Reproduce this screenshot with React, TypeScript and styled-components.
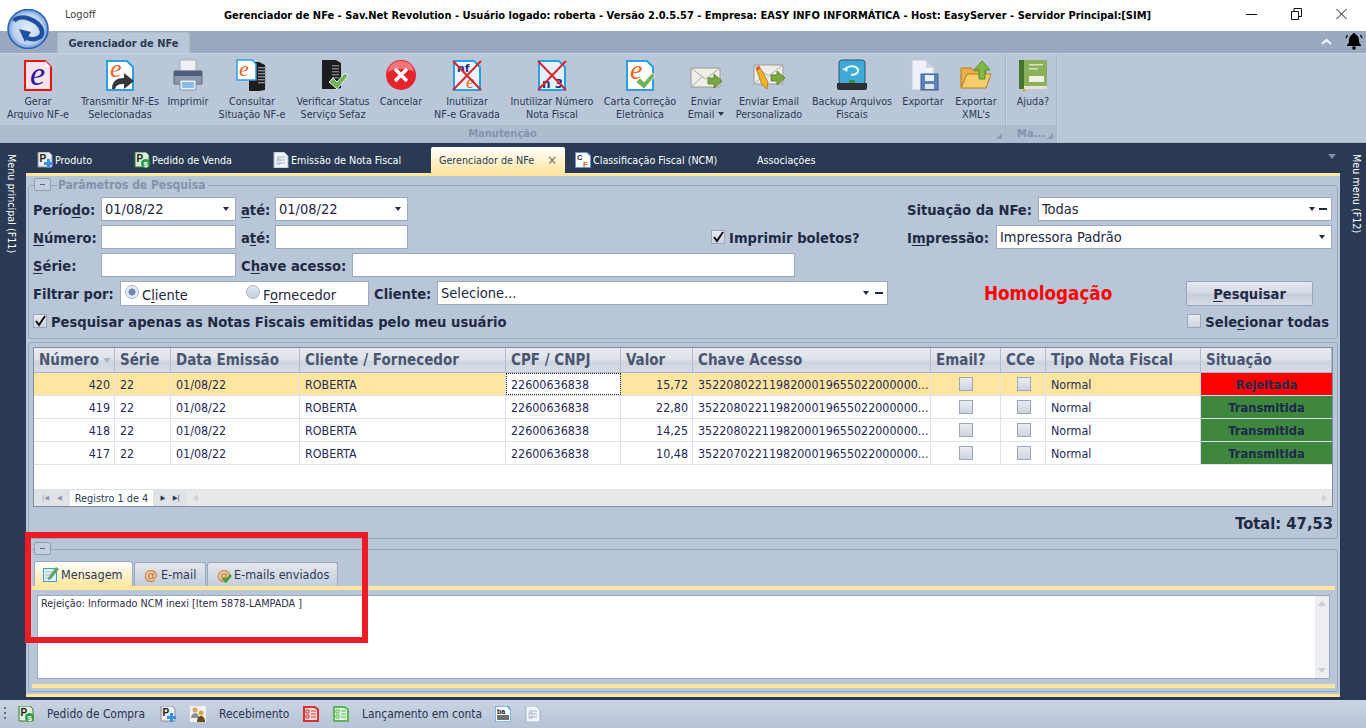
import React from 'react';
import styled, { createGlobalStyle } from 'styled-components';

const Ui = `"DejaVu Sans Condensed", "DejaVu Sans", sans-serif`;

const GlobalStyle = createGlobalStyle`
  html, body { margin: 0; padding: 0; width: 1366px; height: 728px; overflow: hidden; background: #2a3a55; }
  * { box-sizing: border-box; }
  u { text-underline-offset: 2px; }
`;

const Shell = styled.div`
  position: relative;
  width: 1366px;
  height: 728px;
  display: flex;
  flex-direction: column;
  font-family: ${Ui};
  color: #1f2a44;
  overflow: hidden;
`;

const TitleBar = styled.div`
  height: 31px;
  flex: none;
  background: #fff;
  display: flex;
  align-items: center;
  padding-left: 65px;
  color: #000;
`;
const Logoff = styled.span`
  width: 159px;
  font-size: 11px;
  color: #444;
  margin-top: -2px;
`;
const AppTitle = styled.span`
  font-size: 11px;
  font-weight: 700;
  white-space: nowrap;
`;
const WindowButtons = styled.div`
  margin-left: auto;
  display: flex;
  align-items: center;
  gap: 34px;
  padding-right: 19px;
  margin-top: -3px;
`;
const LogoMark = styled.div`
  position: absolute;
  left: 7px;
  top: 9px;
  width: 42px;
  height: 40px;
  z-index: 3;
`;

const RibbonTabs = styled.div`
  height: 22px;
  flex: none;
  background: #9ba9c0;
  padding: 1px 0 0 57px;
  display: flex;
  justify-content: space-between;
`;
const RibbonTab = styled.div`
  width: 133px;
  height: 21px;
  background: #bac7d8;
  border-radius: 3px 3px 0 0;
  border: 1px solid #aebbce;
  border-bottom: 0;
  font-size: 11px;
  font-weight: 700;
  color: #2a3a55;
  display: flex;
  align-items: center;
  justify-content: center;
`;
const RibbonCorner = styled.div`
  display: flex;
  align-items: center;
  gap: 13px;
  padding: 0 3px 3px 0;
`;

const Ribbon = styled.div`
  height: 90px;
  flex: none;
  background: #bac7d8;
  border-top: 1px solid #c9d4e2;
  border-bottom: 1px solid #a9b6ca;
  display: flex;
`;
const RibbonGroup = styled.div<{ $w: number }>`
  width: ${p => p.$w}px;
  flex: none;
  display: flex;
  flex-direction: column;
  border-right: 1px solid #a8b5c9;
  box-shadow: 1px 0 0 #c9d4e2;
`;
const RibbonButtons = styled.div`
  height: 71px;
  display: flex;
  padding-left: 3px;
`;
const GroupCaption = styled.div`
  height: 17px;
  background: #afbccf;
  font-size: 11px;
  font-weight: 700;
  color: #8393ab;
  display: flex;
  align-items: center;
  justify-content: center;
  position: relative;
`;
const Launcher = styled.span`
  position: absolute;
  right: 3px;
  bottom: 3px;
  width: 0;
  height: 0;
  border-left: 6px solid transparent;
  border-bottom: 6px solid #8e9cb3;
`;
const RibbonButton = styled.div<{ $w: number }>`
  width: ${p => p.$w}px;
  flex: none;
  display: flex;
  flex-direction: column;
  align-items: center;
  padding-top: 3px;
`;
const RibbonIcon = styled.div`
  height: 35px;
  width: 36px;
  display: flex;
  justify-content: center;
  align-items: center;
  margin-bottom: 3px;
`;
const RibbonLabel = styled.div`
  font-size: 10.7px;
  line-height: 13px;
  text-align: center;
  white-space: pre;
  color: #2c3a57;
`;
const DropArrow = styled.span`
  display: inline-block;
  width: 0;
  height: 0;
  margin-left: 4px;
  vertical-align: 2px;
  border-left: 3px solid transparent;
  border-right: 3px solid transparent;
  border-top: 4px solid #2c3a57;
`;

const Workspace = styled.div`
  flex: 1;
  min-height: 0;
  display: flex;
  background: #2a3a55;
  padding-bottom: 3px;
`;
const SideRail = styled.div<{ $right?: boolean }>`
  width: 26px;
  flex: none;
  padding: 11px ${p => (p.$right ? 0 : 4)}px 0 ${p => (p.$right ? 6 : 0)}px;
  display: flex;
  justify-content: center;
  color: #fff;
  font-size: 10.7px;
`;
const SideText = styled.span`
  writing-mode: vertical-rl;
  white-space: nowrap;
  height: max-content;
`;
const Center = styled.div`
  flex: 1;
  min-width: 0;
  display: flex;
  flex-direction: column;
`;
const DocTabs = styled.div`
  height: 30px;
  flex: none;
  display: flex;
  align-items: flex-end;
  color: #fff;
  font-size: 10.7px;
  position: relative;
`;
const DocTab = styled.div<{ $w: number; $active?: boolean }>`
  width: ${p => p.$w}px;
  height: 26px;
  flex: none;
  display: flex;
  align-items: center;
  gap: 2px;
  padding: 0 ${p => (p.$active ? 8 : 0)}px;
  color: ${p => (p.$active ? '#2a3a55' : '#fff')};
  background: ${p => (p.$active ? 'linear-gradient(#ffffff, #ffe6a0)' : 'transparent')};
  border-radius: ${p => (p.$active ? '2px 2px 0 0' : '0')};
`;
const TabSpacer = styled.div<{ $w: number }>`
  width: ${p => p.$w}px;
  flex: none;
`;
const TabClose = styled.span`
  margin-left: auto;
  font-size: 13px;
  font-weight: 700;
  color: #7d7a68;
  line-height: 1;
`;
const TabsMenu = styled.span`
  position: absolute;
  right: 4px;
  top: 11px;
  width: 0;
  height: 0;
  border-left: 4px solid transparent;
  border-right: 4px solid transparent;
  border-top: 5px solid #7f8ea8;
`;

const Content = styled.div`
  flex: 1;
  min-height: 0;
  background: #b9c6d8;
  border-top: 3px solid #ffe6a0;
  border-bottom: 3px solid #ffe6a0;
  padding: 0 2px;
  display: flex;
  flex-direction: column;
`;
const GroupBox = styled.div<{ $mt: number; $h: number }>`
  margin-top: ${p => p.$mt}px;
  height: ${p => p.$h}px;
  flex: none;
  border: 1px solid #9ba9c0;
  border-radius: 3px;
`;
const Legend = styled.div`
  height: 13px;
  margin: -8px 0 0 5px;
  display: flex;
  align-items: center;
  gap: 7px;
`;
const CollapseButton = styled.span`
  width: 17px;
  height: 13px;
  border: 1px solid #8f9db5;
  border-radius: 2px;
  background: #c3cfde;
  display: flex;
  align-items: center;
  justify-content: center;
  &::before {
    content: '';
    width: 5px;
    height: 1px;
    background: #5a6a85;
  }
`;
const LegendText = styled.span`
  font-size: 12px;
  font-weight: 700;
  color: #8393ab;
  background: #b9c6d8;
  padding-right: 3px;
`;

const Form = styled.div`
  margin-top: 6px;
  padding: 0 5px 0 4px;
  display: flex;
  flex-direction: column;
  gap: 4px;
`;
const FormRow = styled.div`
  height: 24px;
  display: flex;
  align-items: center;
`;
const FieldLabel = styled.label<{ $w: number; $gap?: number }>`
  width: ${p => p.$w}px;
  margin-left: ${p => p.$gap ?? 0}px;
  flex: none;
  font-size: 14.6px;
  font-weight: 700;
  color: #1f2a44;
  white-space: nowrap;
`;
const Input = styled.div<{ $w: number }>`
  width: ${p => p.$w}px;
  height: 24px;
  flex: none;
  background: #fff;
  border: 1px solid #9ba9c0;
  display: flex;
  align-items: center;
  padding: 0 3px 0 3px;
  font-size: 14.5px;
  color: #1d2740;
`;
const Caret = styled.span<{ $mr?: number }>`
  margin-left: auto;
  margin-right: ${p => p.$mr ?? 3}px;
  width: 0;
  height: 0;
  border-left: 3.5px solid transparent;
  border-right: 3.5px solid transparent;
  border-top: 4px solid #1f2a44;
`;
const Dash = styled.span`
  width: 8px;
  height: 2px;
  margin-right: 1px;
  background: #1f2a44;
`;
const Push = styled.div`
  margin-left: auto;
  display: flex;
  align-items: center;
`;
const RadioBox = styled.div`
  width: 249px;
  height: 25px;
  flex: none;
  background: #fff;
  border: 1px solid #9ba9c0;
  display: flex;
  align-items: center;
  padding-left: 4px;
  font-size: 14.5px;
  color: #1d2740;
`;
const RadioItem = styled.span<{ $w: number }>`
  width: ${p => p.$w}px;
  display: flex;
  align-items: center;
  gap: 3px;
`;
const RadioText = styled.span`
  margin-top: 3px;
`;
const RadioDot = styled.span<{ $on?: boolean }>`
  width: 14px;
  height: 14px;
  border-radius: 50%;
  border: 1px solid #a9b4c5;
  background: ${p =>
    p.$on
      ? 'radial-gradient(circle, #6f86b4 0 3px, #e9edf3 4px)'
      : 'linear-gradient(#e4e8ee, #c6cedb)'};
  margin-top: -3px;
`;
const Check = styled.span<{ $size?: number; $ml?: number }>`
  width: ${p => p.$size ?? 14}px;
  height: ${p => p.$size ?? 14}px;
  flex: none;
  margin-left: ${p => p.$ml ?? 0}px;
  border: 1px solid #9aa7bc;
  background: linear-gradient(#e9ecf2, #cdd4e0);
  display: inline-flex;
  align-items: center;
  justify-content: center;
`;
const CheckLabel = styled.label<{ $mr?: number }>`
  font-size: 14.6px;
  font-weight: 700;
  color: #1f2a44;
  margin: 0 ${p => p.$mr ?? 0}px 0 4px;
  white-space: nowrap;
`;
const Homolog = styled.span`
  margin-left: 96px;
  width: 202px;
  font-size: 18.7px;
  font-weight: 700;
  color: #ff0000;
  white-space: nowrap;
`;
const SearchButton = styled.button`
  width: 127px;
  height: 25px;
  border: 1px solid #98a5bb;
  border-radius: 2px;
  background: linear-gradient(#e6e9ef 0, #d2d8e3 50%, #c6cddb 55%, #d7dce5 100%);
  font-family: ${Ui};
  font-size: 14.6px;
  font-weight: 700;
  color: #1f2a44;
  padding: 0;
`;

const GridPanel = styled.div`
  margin: 4px 4px 0;
  height: 160px;
  background: #fff;
  border: 1px solid #7f8da3;
  display: flex;
  flex-direction: column;
`;
const columns = '81px 56px 129px 206px 115px 72px 238px 70px 45px 155px 131px';
const GridHead = styled.div`
  height: 25px;
  flex: none;
  display: grid;
  grid-template-columns: ${columns};
  background: linear-gradient(#e7eaf0 0, #dde2ea 50%, #cfd6e1 55%, #d6dce6 100%);
  border-bottom: 1px solid #a9b5c8;
`;
const HeadCell = styled.div`
  border-right: 1px solid #b0bbcd;
  padding-left: 5px;
  display: flex;
  align-items: center;
  font-size: 15px;
  font-weight: 700;
  color: #4a5670;
  white-space: nowrap;
  overflow: hidden;
`;
const SortArrow = styled.span`
  margin-left: 4px;
  width: 0;
  height: 0;
  border-left: 4px solid transparent;
  border-right: 4px solid transparent;
  border-top: 5px solid #a9b5c8;
`;
const GridRow = styled.div<{ $selected?: boolean }>`
  height: 23px;
  flex: none;
  display: grid;
  grid-template-columns: ${columns};
  background: ${p => (p.$selected ? '#ffe6a0' : '#fff')};
  border-bottom: 1px solid #dce1eb;
`;
const Cell = styled.div<{ $align?: string; $focus?: boolean }>`
  border-right: 1px solid #dce1eb;
  padding: 0 4px 0 5px;
  display: flex;
  align-items: center;
  justify-content: ${p => p.$align ?? 'flex-start'};
  font-size: 12.4px;
  color: #1f2a55;
  white-space: nowrap;
  overflow: hidden;
  ${p => (p.$focus ? 'outline: 1px dotted #222; outline-offset: -1px; background: #fff;' : '')}
`;
const StatusCell = styled.div<{ $bg: string }>`
  background: ${p => p.$bg};
  display: flex;
  align-items: center;
  justify-content: center;
  font-size: 12.8px;
  font-weight: 700;
  color: #1c2a4a;
`;
const GridBlank = styled.div`
  flex: 1;
`;
const GridFooter = styled.div`
  height: 17px;
  flex: none;
  display: flex;
  align-items: center;
  background: #e8e9eb;
  border-top: 1px solid #dfe1e4;
  font-size: 10.8px;
  color: #2a3a55;
`;
const NavGlyphs = styled.span<{ $w: number; $muted?: boolean }>`
  width: ${p => p.$w}px;
  flex: none;
  display: flex;
  align-items: center;
  justify-content: space-evenly;
  background: #dfe2e7;
  align-self: stretch;
  color: ${p => (p.$muted ? '#8d98aa' : '#2a3a55')};
  font-size: 7px;
`;
const NavPage = styled.span`
  width: 83px;
  align-self: stretch;
  flex: none;
  background: #fff;
  display: flex;
  align-items: center;
  justify-content: center;
`;
const ScrollArrow = styled.span<{ $right?: boolean }>`
  ${p => (p.$right ? 'margin-left: auto; margin-right: 5px;' : 'margin-left: 6px;')}
  width: 0;
  height: 0;
  border-top: 4px solid transparent;
  border-bottom: 4px solid transparent;
  ${p => (p.$right ? 'border-left: 5px solid #cfd3d9;' : 'border-right: 5px solid #cfd3d9;')}
`;
const TotalRow = styled.div`
  margin: 7px 4px 0;
  text-align: right;
  font-size: 16.4px;
  font-weight: 700;
  color: #1f2a44;
`;

const TabLine = styled.div`
  margin: 6px 0 0 5px;
  height: 25px;
  display: flex;
  align-items: flex-end;
  gap: 1px;
`;
const MsgTab = styled.div<{ $w: number; $active?: boolean; $left?: number }>`
  width: ${p => p.$w}px;
  height: ${p => (p.$active ? 25 : 24)}px;
  flex: none;
  border: 1px solid #9ba9c0;
  border-bottom: 0;
  border-radius: 3px 3px 0 0;
  background: ${p =>
    p.$active ? 'linear-gradient(#ffffff, #ffe6a0)' : 'linear-gradient(#e3e7ee, #c4cddb)'};
  display: flex;
  align-items: center;
  padding-left: 8px;
  gap: 2px;
  font-size: 12.5px;
  color: #2a3a55;
  white-space: nowrap;
`;
const TabPane = styled.div`
  margin: 0 2px 0 3px;
  height: 102px;
  border-top: 4px solid #ffe6a0;
  border-bottom: 4px solid #ffe6a0;
  background: #b9c6d8;
  padding: 5px 5px;
`;
const MemoBox = styled.div`
  height: 84px;
  background: #fff;
  border: 1px solid #9ba9c0;
  display: flex;
`;
const MemoText = styled.div`
  flex: 1;
  padding: 1px 3px;
  font-size: 10.75px;
  color: #2a3040;
`;
const MemoScroll = styled.div`
  width: 14px;
  flex: none;
  background: #eceef1;
  display: flex;
  flex-direction: column;
  align-items: center;
  justify-content: space-between;
  padding: 5px 0;
`;
const ScrollTip = styled.span<{ $down?: boolean }>`
  width: 0;
  height: 0;
  border-left: 4px solid transparent;
  border-right: 4px solid transparent;
  ${p => (p.$down ? 'border-top: 5px solid #c9cdd3;' : 'border-bottom: 5px solid #c9cdd3;')}
`;

const StatusBar = styled.div`
  height: 28px;
  flex: none;
  background: linear-gradient(#cbd4e2, #b6c3d6);
  display: flex;
  align-items: center;
  padding-left: 4px;
  font-size: 11.9px;
  color: #2a3350;
`;
const Grip = styled.span`
  width: 2px;
  height: 14px;
  margin-right: 12px;
  background: repeating-linear-gradient(#5f6d88 0 2px, transparent 2px 5px);
`;
const StatusItem = styled.span<{ $w: number }>`
  width: ${p => p.$w}px;
  flex: none;
  display: flex;
  align-items: center;
  white-space: nowrap;
`;
const Annotation = styled.div`
  position: absolute;
  left: 25px;
  top: 532px;
  width: 343px;
  height: 111px;
  border: 6px solid #ed1c24;
  pointer-events: none;
`;

const LetterE = ({ x, y, fill, size = 22 }: { x: number; y: number; fill: string; size?: number }) => (
  <text x={x} y={y} fontFamily="Liberation Serif" fontStyle="italic" fontSize={size} fill={fill}>
    e
  </text>
);
const Doc = ({ stroke, fill = '#fff' }: { stroke: string; fill?: string }) => (
  <path d="M3 2h20l6 6v23H3z" fill={fill} stroke={stroke} strokeWidth="2" />
);
const Ico = ({ children, s = 32 }: { children: React.ReactNode; s?: number }) => (
  <svg width={s} height={s} viewBox="0 0 32 32" overflow="visible">
    {children}
  </svg>
);
const Server = ({ x = 12 }: { x?: number }) => (
  <g>
    <path d={`M${x} 3h10l6 3v25l-6 1H${x}z`} fill="#1d1d1f" />
    {[8, 11, 14, 17, 20, 23].map(y => (
      <rect key={y} x={x + 9} y={y} width="8" height="1.4" fill="#8d8f94" />
    ))}
  </g>
);
const GreenCheck = ({ dx = 0, dy = 0 }: { dx?: number; dy?: number }) => (
  <path
    transform={`translate(${dx} ${dy})`}
    d="M13 22l4-4 4 4 8-9 3 3-11 13z"
    fill="#6fb356"
    stroke="#e9f3e2"
    strokeWidth="1"
  />
);
const GreenArrow = ({ dx = 0, dy = 0 }: { dx?: number; dy?: number }) => (
  <path transform={`translate(${dx} ${dy})`} d="M17 18h6v-4l8 7-8 7v-4h-6z" fill="#7aa83f" stroke="#50762a" strokeWidth=".8" />
);
const Envelope = () => (
  <g>
    <path d="M1 8h29v19H1z" fill="#efefea" stroke="#9a9a92" />
    <path d="M1 8l14.500 11L30 8M1 27l11-10M30 27L19 17" fill="none" stroke="#a9a9a2" />
  </g>
);
const RedCross = () => <path d="M2 2l28 29M30 2L2 31" stroke="#d8242c" strokeWidth="2" fill="none" />;

const iconGerar = (
  <Ico>
    <path d="M3 2h20l6 6v23H3z" fill="#f7e4ea" stroke="#ee1111" strokeWidth="2" />
    <path d="M23 2v6h6z" fill="#fff" />
    <LetterE x={8} y={26} fill="#2b169c" size={34} />
  </Ico>
);
const iconTransmitir = (
  <Ico>
    <Doc stroke="#2b9fe0" />
    <LetterE x={6} y={18} fill="#e9651c" size={26} />
    <path d="M8 30c0-8 5-11 12-11v-5l10 8-10 8v-5c-5 0-8 1-9 5z" fill="#35373c" />
  </Ico>
);
const iconImprimir = (
  <Ico>
    <path d="M8 1h16v11H8z" fill="#eef0f6" stroke="#aab1be" />
    <path d="M2 12h28v13H2z" fill="#8f97aa" stroke="#5d6679" />
    <path d="M2 12h28v5H2z" fill="#4f5d7c" />
    <path d="M8 21h16v10H8z" fill="#eef1f6" stroke="#7f94b3" />
    <path d="M10 23h12v6H10z" fill="#8fb9e6" />
  </Ico>
);
const iconConsultar = (
  <Ico>
    <Server x={13} />
    <path d="M1 1h15l4 4v16H1z" fill="#fff" stroke="#2b9fe0" strokeWidth="1.500" />
    <LetterE x={3} y={17} fill="#e9651c" size={22} />
  </Ico>
);
const iconVerificar = (
  <Ico>
    <path d="M5 1h14l5 3v25l-5 1H5z" fill="#1d1d1f" />
    {[6, 9, 12, 15, 18].map(y => (
      <rect key={y} x="15" y={y} width="7" height="1.400" fill="#7d7f84" />
    ))}
    <GreenCheck dx={-1} dy={1} />
  </Ico>
);
const iconCancelar = (
  <Ico>
    <circle cx="16" cy="16" r="15" fill="#e4232b" />
    <path d="M3 13a13 11 0 0 1 26 0c-6-4-20-4-26 0z" fill="#f4757a" />
    <path d="M10 10l12 12M22 10L10 22" stroke="#fff" strokeWidth="3.500" />
  </Ico>
);
const iconInutNfe = (
  <Ico>
    <Doc stroke="#2b9fe0" fill="#eef6fd" />
    <text x="6" y="13" fontFamily="DejaVu Sans" fontWeight="700" fontSize="11" fill="#1c2f8c">nf</text>
    <LetterE x={15} y={29} fill="#e9651c" size={19} />
    <RedCross />
  </Ico>
);
const iconInutNum = (
  <Ico>
    <Doc stroke="#2b9fe0" fill="#e6f2fb" />
    <text x="6" y="29" fontFamily="DejaVu Sans" fontWeight="700" fontSize="12" fill="#1c2f8c">n 3</text>
    <RedCross />
  </Ico>
);
const iconCarta = (
  <Ico>
    <Doc stroke="#2b9fe0" />
    <LetterE x={6} y={20} fill="#e9651c" size={28} />
    <GreenCheck dx={-1} dy={1} />
  </Ico>
);
const iconEnviar = (
  <Ico>
    <g transform="translate(0 1)">
      <Envelope />
    </g>
    <GreenArrow dx={1} dy={1} />
  </Ico>
);
const iconEnviarPers = (
  <Ico>
    <g transform="translate(0 -2)">
      <Envelope />
    </g>
    <GreenArrow dx={1} dy={-2} />
    <path d="M3 9l3-2 9 16-1 7-5-4z" fill="#f0b429" stroke="#a8741a" strokeWidth=".8" />
    <path d="M3 9l3-2 1.500 2.500-3 2z" fill="#e0564c" />
  </Ico>
);
const iconBackup = (
  <Ico>
    <rect x="3" y="1" width="26" height="24" rx="3" fill="#3fa9d8" stroke="#25566e" />
    <path d="M1 24h30v5a2 2 0 0 1-2 2H3a2 2 0 0 1-2-2z" fill="#2b2f33" />
    <path d="M9 11c1-4 9-5 12-2 3 3 0 7-6 7" fill="none" stroke="#e8f7fd" strokeWidth="2" />
    <path d="M6 10l5 3 1-5z" fill="#e8f7fd" />
    <rect x="13" y="21" width="6" height="3" fill="#3c8a46" />
  </Ico>
);
const iconExportar = (
  <Ico>
    <path d="M5 1h14l8 8v22H5z" fill="#f0f2fa" stroke="#c0c7d6" />
    <path d="M19 1v8h8z" fill="#cfd6e4" />
    <rect x="14" y="15" width="17" height="16" fill="#5d83b8" stroke="#3e5f8f" />
    <rect x="18" y="16" width="9" height="6" fill="#e8eef7" />
    <rect x="18" y="25" width="9" height="5" fill="#dfe7f2" />
  </Ico>
);
const iconExportXml = (
  <Ico>
    <path d="M1 9h10l3 3h12v5H7L1 28z" fill="#e9b04a" stroke="#b57c1f" />
    <path d="M7 15h24l-5 14H1z" fill="#f7cd6d" stroke="#b57c1f" />
    <path d="M22 2l8 9h-5v9h-6v-9h-5z" fill="#7dbb42" stroke="#568a29" />
  </Ico>
);
const iconAjuda = (
  <Ico>
    <rect x="2" y="1" width="5" height="29" fill="#45732c" />
    <rect x="7" y="1" width="23" height="29" fill="#8bb05c" />
    <rect x="7" y="27" width="23" height="3" fill="#e6e6d8" />
    <path d="M12 5h14v1.500H12zM12 9h9v1.500h-9z" fill="#d9e4c4" />
    <rect x="12" y="17" width="15" height="6" fill="#f2f2e2" />
    <circle cx="7" cy="31" r="1.500" fill="#e9a21f" />
  </Ico>
);

const ribbonItems: { label: string; w: number; icon: React.ReactNode; drop?: boolean }[] = [
  { label: 'Gerar\nArquivo NF-e', w: 70, icon: iconGerar },
  { label: 'Transmitir NF-Es\nSelecionadas', w: 94, icon: iconTransmitir },
  { label: 'Imprimir', w: 42, icon: iconImprimir },
  { label: 'Consultar\nSituação NF-e', w: 86, icon: iconConsultar },
  { label: 'Verificar Status\nServiço Sefaz', w: 76, icon: iconVerificar },
  { label: 'Cancelar', w: 60, icon: iconCancelar },
  { label: 'Inutilizar\nNF-e Gravada', w: 72, icon: iconInutNfe },
  { label: 'Inutilizar Número\nNota Fiscal', w: 98, icon: iconInutNum },
  { label: 'Carta Correção\nEletrônica', w: 78, icon: iconCarta },
  { label: 'Enviar\nEmail', w: 54, icon: iconEnviar, drop: true },
  { label: 'Enviar Email\nPersonalizado', w: 72, icon: iconEnviarPers },
  { label: 'Backup Arquivos\nFiscais', w: 94, icon: iconBackup },
  { label: 'Exportar', w: 48, icon: iconExportar },
  { label: "Exportar\nXML's", w: 58, icon: iconExportXml },
];

const PDoc = ({ badge }: { badge: 'plus' | 'money' }) => (
  <svg width="16" height="16" viewBox="0 0 16 16">
    <path d="M1 0h11l3 3v12H1z" fill={badge === 'money' ? '#dff0d8' : '#eceef2'} stroke={badge === 'money' ? '#2f7d34' : '#8a8f98'} />
    <text x="2.500" y="10" fontFamily="Liberation Sans" fontWeight="700" fontSize="10" fill="#222">P</text>
    {badge === 'plus' ? (
      <path d="M10 7h3v3h3v3h-3v3h-3v-3H7v-3h3z" fill="#3a8ee6" />
    ) : (
      <>
        <circle cx="11.500" cy="11.500" r="4.500" fill="#2f9d3f" />
        <text x="9.500" y="14.500" fontFamily="Liberation Sans" fontWeight="700" fontSize="8" fill="#fff">$</text>
      </>
    )}
  </svg>
);
const ListDoc = ({ stroke = '#9fb0c8', fill = '#f3f5f8' }: { stroke?: string; fill?: string }) => (
  <svg width="16" height="16" viewBox="0 0 16 16">
    <path d="M1 0h10l4 4v12H1z" fill={fill} stroke={stroke} />
    <path d="M4 5h8M4 8h8M4 11h8" stroke={stroke} strokeWidth="1.200" />
    <path d="M4 6.500h3v6H4z" fill="none" stroke={stroke} strokeWidth=".6" />
  </svg>
);
const FormDoc = ({ color, tint }: { color: string; tint: string }) => (
  <svg width="16" height="16" viewBox="0 0 16 16">
    <path d="M0 0h12l4 3v13H0z" fill={color} />
    <path d="M2 2h9l3 2v10H2z" fill={tint} />
    <path d="M3 4h3v3H3zM3 9h3v3H3z" fill="none" stroke={color} />
    <path d="M8 5h5M8 8h5M8 11h5" stroke={color} strokeWidth="1.200" />
  </svg>
);
const CfDoc = () => (
  <svg width="16" height="16" viewBox="0 0 16 16">
    <path d="M0 0h12l4 4v12H0z" fill="#fff" stroke="#3b6fc4" strokeWidth="1.500" />
    <text x="2" y="8" fontFamily="Liberation Sans" fontWeight="700" fontSize="7.500" fill="#223">C</text>
    <text x="8" y="14.500" fontFamily="Liberation Sans" fontWeight="700" fontSize="8" fill="#e8651c">F</text>
  </svg>
);
const People = () => (
  <svg width="16" height="16" viewBox="0 0 16 16">
    <rect width="16" height="16" fill="#f1f1ee" />
    <circle cx="5" cy="4" r="2.500" fill="#d7a36d" />
    <path d="M1 12c0-3 2-5 4-5s4 2 4 5z" fill="#8c8f96" />
    <circle cx="11" cy="7" r="2.500" fill="#e0a23c" />
    <path d="M7 16c0-4 2-6 4-6s4 2 4 6z" fill="#6a4a1c" />
  </svg>
);
const Barcode = () => (
  <svg width="16" height="16" viewBox="0 0 16 16">
    <path d="M0 0h12l4 4v12H0z" fill="#fff" stroke="#46a6e8" strokeWidth="1.500" />
    <text x="2" y="7.500" fontFamily="Liberation Sans" fontWeight="700" fontSize="7" fill="#111">ba</text>
    <path d="M3 9v5M5 9v5M7 9v5M9 9v5M11 9v5M13 9v5" stroke="#111" strokeWidth="1.200" />
  </svg>
);
const MiniIcon = ({ kind }: { kind: 'memo' | 'at' | 'atok' }) => (
  <svg width="16" height="16" viewBox="0 0 16 16">
    {kind === 'memo' ? (
      <>
        <rect x="0.500" y="2.500" width="13" height="13" fill="#e4f2fb" stroke="#3d9fd3" />
        <path d="M2 6h8M2 9h8M2 12h5" stroke="#9cb9c9" />
        <path d="M5 12L13 1l3 2-8 10-3 1z" fill="#5ea36b" />
      </>
    ) : (
      <>
        <text x="8" y="13" textAnchor="middle" fontFamily="DejaVu Sans" fontWeight="700" fontSize="14" fill="#e2852b">@</text>
        {kind === 'atok' && <path d="M6 12l2-2 2 2 4-5 2 2-6 7z" fill="#3f9e3a" />}
      </>
    )}
  </svg>
);

const gridRows = [
  { n: '420', chave: '3522080221198200019655022000000...', valor: '15,72', ok: false },
  { n: '419', chave: '3522080221198200019655022000000...', valor: '22,80', ok: true },
  { n: '418', chave: '3522080221198200019655022000000...', valor: '14,25', ok: true },
  { n: '417', chave: '3522070221198200019655022000000...', valor: '10,48', ok: true },
];

const CheckMark = () => (
  <svg width="12" height="12" viewBox="0 0 12 12">
    <path d="M2 6l3 4 6-9" fill="none" stroke="#111" strokeWidth="2" />
  </svg>
);

export default function App() {
  return (
    <Shell>
      <GlobalStyle />
      <LogoMark>
        <svg width="42" height="40" viewBox="0 0 42 40">
          <defs>
            <radialGradient id="globe" cx="50%" cy="50%" r="55%">
              <stop offset="0" stopColor="#e4eefb" />
              <stop offset="0.7" stopColor="#b8d0f0" />
              <stop offset="1" stopColor="#3f78c8" />
            </radialGradient>
          </defs>
          <ellipse cx="21" cy="20" rx="20" ry="19.500" fill="url(#globe)" stroke="#2a62b8" strokeWidth="1.500" />
          <path d="M7 12C13 4 33 11 35 22c1 7-8 10-15 7" fill="none" stroke="#1f4f9c" strokeWidth="4.500" />
          <path d="M12 20l12 3-6 10z" fill="#1f4f9c" />
        </svg>
      </LogoMark>

      <TitleBar>
        <Logoff>Logoff</Logoff>
        <AppTitle>
          Gerenciador de NFe - Sav.Net Revolution - Usuário logado: roberta - Versão 2.0.5.57 - Empresa: EASY INFO
          INFORMÁTICA - Host: EasyServer - Servidor Principal:[SIM]
        </AppTitle>
        <WindowButtons>
          <svg width="11" height="12" viewBox="0 0 11 12"><path d="M0 6.500h11" stroke="#111" /></svg>
          <svg width="11" height="12" viewBox="0 0 11 12"><path d="M.5 3.500h7v8h-7zM3 3.500V.5h7.500v8H7.500" fill="none" stroke="#111" /></svg>
          <svg width="11" height="12" viewBox="0 0 11 12"><path d="M.5 1l10 10M10.500 1L.5 11" stroke="#111" /></svg>
        </WindowButtons>
      </TitleBar>

      <RibbonTabs>
        <RibbonTab>Gerenciador de NFe</RibbonTab>
        <RibbonCorner>
          <svg width="11" height="7" viewBox="0 0 11 7"><path d="M1 6l4.500-4L10 6" fill="none" stroke="#f2f4f8" strokeWidth="2.200" /></svg>
          <svg width="18" height="18" viewBox="0 0 18 18">
            <path d="M9 1c1 0 1.500.7 1.500 1.500C13 3.500 14 6 14 9c0 2 1 3 2 4v1H2v-1c1-1 2-2 2-4 0-3 1-5.500 3.500-6.500C7.500 1.700 8 1 9 1z" fill="#000" />
            <circle cx="9" cy="16" r="1.800" fill="#000" />
            <path d="M2.500 3L1 6M15.500 3L17 6" stroke="#000" strokeWidth="1.200" />
          </svg>
        </RibbonCorner>
      </RibbonTabs>

      <Ribbon>
        <RibbonGroup $w={1006}>
          <RibbonButtons>
            {ribbonItems.map(item => (
              <RibbonButton key={item.label} $w={item.w}>
                <RibbonIcon>{item.icon}</RibbonIcon>
                <RibbonLabel>
                  {item.label}
                  {item.drop && <DropArrow />}
                </RibbonLabel>
              </RibbonButton>
            ))}
          </RibbonButtons>
          <GroupCaption>
            Manutenção
            <Launcher />
          </GroupCaption>
        </RibbonGroup>
        <RibbonGroup $w={51}>
          <RibbonButtons>
            <RibbonButton $w={48}>
              <RibbonIcon>{iconAjuda}</RibbonIcon>
              <RibbonLabel>Ajuda?</RibbonLabel>
            </RibbonButton>
          </RibbonButtons>
          <GroupCaption>
            Ma...
            <Launcher />
          </GroupCaption>
        </RibbonGroup>
      </Ribbon>

      <Workspace>
        <SideRail>
          <SideText>Menu principal (F11)</SideText>
        </SideRail>
        <Center>
          <DocTabs>
            <TabSpacer $w={11} />
            <DocTab $w={97}><PDoc badge="plus" />Produto</DocTab>
            <DocTab $w={139}><PDoc badge="money" />Pedido de Venda</DocTab>
            <DocTab $w={158}><ListDoc />Emissão de Nota Fiscal</DocTab>
            <DocTab $w={134} $active>Gerenciador de NFe<TabClose>✕</TabClose></DocTab>
            <TabSpacer $w={10} />
            <DocTab $w={182}><CfDoc />Classificação Fiscal (NCM)</DocTab>
            <DocTab $w={100}>Associações</DocTab>
            <TabsMenu />
          </DocTabs>
          <Content>
            <GroupBox $mt={9} $h={154}>
              <Legend>
                <CollapseButton />
                <LegendText>Parâmetros de Pesquisa</LegendText>
              </Legend>
              <Form>
                <FormRow>
                  <FieldLabel $w={68}>Perío<u>d</u>o:</FieldLabel>
                  <Input $w={135}>01/08/22<Caret /></Input>
                  <FieldLabel $w={34} $gap={5}><u>a</u>té:</FieldLabel>
                  <Input $w={133}>01/08/22<Caret /></Input>
                  <Push>
                    <FieldLabel $w={131}>Situação da NFe:</FieldLabel>
                    <Input $w={294}>Todas<Caret $mr={4} /><Dash /></Input>
                  </Push>
                </FormRow>
                <FormRow>
                  <FieldLabel $w={68}><u>N</u>úmero:</FieldLabel>
                  <Input $w={135} />
                  <FieldLabel $w={34} $gap={5}>a<u>t</u>é:</FieldLabel>
                  <Input $w={133} />
                  <Check $ml={303}><CheckMark /></Check>
                  <CheckLabel>Imprimir boletos?</CheckLabel>
                  <Push>
                    <FieldLabel $w={89}>I<u>m</u>pressão:</FieldLabel>
                    <Input $w={336}>Impressora Padrão<Caret /></Input>
                  </Push>
                </FormRow>
                <FormRow>
                  <FieldLabel $w={68}><u>S</u>érie:</FieldLabel>
                  <Input $w={135} />
                  <FieldLabel $w={111} $gap={5}>C<u>h</u>ave acesso:</FieldLabel>
                  <Input $w={443} />
                </FormRow>
                <FormRow>
                  <FieldLabel $w={87}>Filtrar por:</FieldLabel>
                  <RadioBox>
                    <RadioItem $w={121}><RadioDot $on /><RadioText>C<u>l</u>iente</RadioText></RadioItem>
                    <RadioItem $w={120}><RadioDot /><RadioText>F<u>o</u>rnecedor</RadioText></RadioItem>
                  </RadioBox>
                  <FieldLabel $w={63} $gap={5}>Cliente:</FieldLabel>
                  <Input $w={451}>Selecione...<Caret $mr={6} /><Dash /></Input>
                  <Homolog>Homologação</Homolog>
                  <SearchButton type="button"><u>P</u>esquisar</SearchButton>
                </FormRow>
                <FormRow>
                  <Check><CheckMark /></Check>
                  <CheckLabel>Pesquisar apenas as Notas Fiscais emitidas pelo meu usuário</CheckLabel>
                  <Push>
                    <Check />
                    <CheckLabel $mr={3}>Sele<u>c</u>ionar todas</CheckLabel>
                  </Push>
                </FormRow>
              </Form>
            </GroupBox>

            <GroupBox $mt={3} $h={197}>
              <GridPanel>
                <GridHead>
                  <HeadCell>Número<SortArrow /></HeadCell>
                  <HeadCell>Série</HeadCell>
                  <HeadCell>Data Emissão</HeadCell>
                  <HeadCell>Cliente / Fornecedor</HeadCell>
                  <HeadCell>CPF / CNPJ</HeadCell>
                  <HeadCell>Valor</HeadCell>
                  <HeadCell>Chave Acesso</HeadCell>
                  <HeadCell>Email?</HeadCell>
                  <HeadCell>CCe</HeadCell>
                  <HeadCell>Tipo Nota Fiscal</HeadCell>
                  <HeadCell>Situação</HeadCell>
                </GridHead>
                {gridRows.map((r, i) => (
                  <GridRow key={r.n} $selected={i === 0}>
                    <Cell $align="flex-end">{r.n}</Cell>
                    <Cell>22</Cell>
                    <Cell>01/08/22</Cell>
                    <Cell>ROBERTA</Cell>
                    <Cell $focus={i === 0}>22600636838</Cell>
                    <Cell $align="flex-end">{r.valor}</Cell>
                    <Cell>{r.chave}</Cell>
                    <Cell $align="center"><Check /></Cell>
                    <Cell $align="center"><Check /></Cell>
                    <Cell>Normal</Cell>
                    <StatusCell $bg={r.ok ? '#3f873f' : '#ff0000'}>{r.ok ? 'Transmitida' : 'Rejeitada'}</StatusCell>
                  </GridRow>
                ))}
                <GridBlank />
                <GridFooter>
                  <NavGlyphs $w={36} $muted>
                    <span>|◀</span>
                    <span>◀</span>
                  </NavGlyphs>
                  <NavPage>Registro 1 de 4</NavPage>
                  <NavGlyphs $w={34}>
                    <span>▶</span>
                    <span>▶|</span>
                  </NavGlyphs>
                  <ScrollArrow />
                  <ScrollArrow $right />
                </GridFooter>
              </GridPanel>
              <TotalRow>Total: 47,53</TotalRow>
            </GroupBox>

            <GroupBox $mt={10} $h={143}>
              <Legend>
                <CollapseButton />
              </Legend>
              <TabLine>
                <MsgTab $w={99} $active><MiniIcon kind="memo" />Mensagem</MsgTab>
                <MsgTab $w={72}><MiniIcon kind="at" />E-mail</MsgTab>
                <MsgTab $w={131}><MiniIcon kind="atok" />E-mails enviados</MsgTab>
              </TabLine>
              <TabPane>
                <MemoBox>
                  <MemoText>Rejeição: Informado NCM inexi [Item 5878-LAMPADA ]</MemoText>
                  <MemoScroll>
                    <ScrollTip />
                    <ScrollTip $down />
                  </MemoScroll>
                </MemoBox>
              </TabPane>
            </GroupBox>
          </Content>
        </Center>
        <SideRail $right>
          <SideText>Meu menu (F12)</SideText>
        </SideRail>
      </Workspace>

      <StatusBar>
        <Grip />
        <StatusItem $w={29}><PDoc badge="money" /></StatusItem>
        <StatusItem $w={113}>Pedido de Compra</StatusItem>
        <StatusItem $w={30}><PDoc badge="plus" /></StatusItem>
        <StatusItem $w={29}><People /></StatusItem>
        <StatusItem $w={84}>Recebimento</StatusItem>
        <StatusItem $w={30}><FormDoc color="#d8302f" tint="#f7dddd" /></StatusItem>
        <StatusItem $w={29}><FormDoc color="#58b957" tint="#e2f6de" /></StatusItem>
        <StatusItem $w={133}>Lançamento em conta</StatusItem>
        <StatusItem $w={30}><Barcode /></StatusItem>
        <StatusItem $w={20}><ListDoc /></StatusItem>
      </StatusBar>

      <Annotation />
    </Shell>
  );
}
